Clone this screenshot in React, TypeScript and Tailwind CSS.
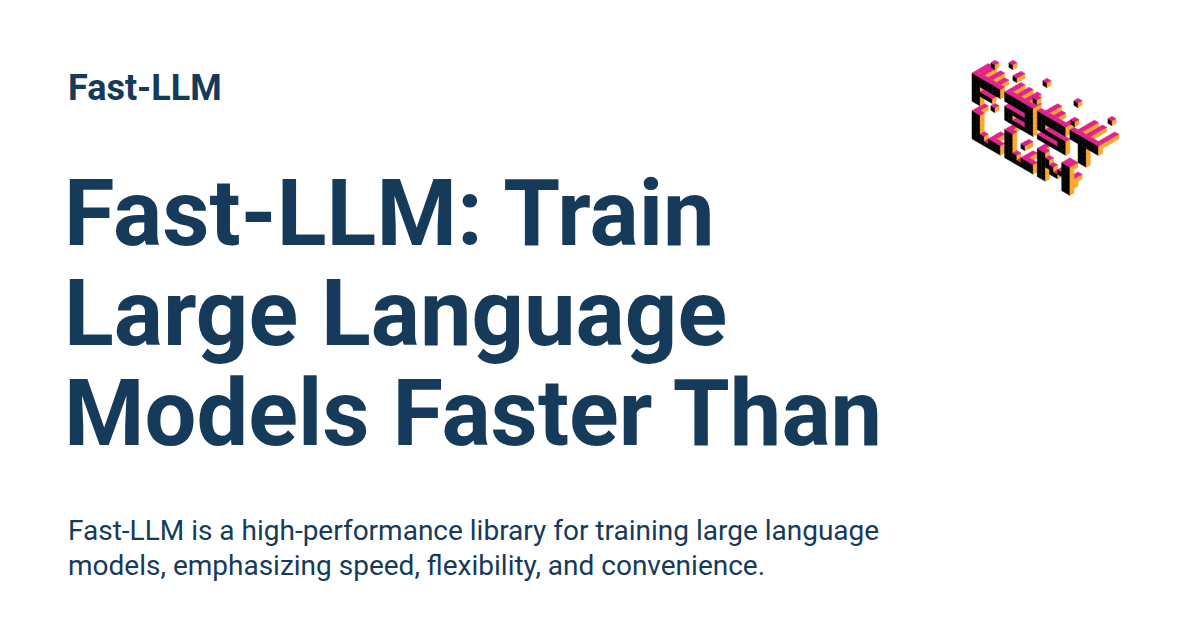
import React from 'react';

const A = 4.08;
const B = 2.36;
const H = 4.7;
const pt = (u: number, v: number, z: number) =>
  `${(u + v) * A},${(u - v) * B - z * H}`;

// each cell holds the depth of the column, rows run top to bottom
const letters: { u: number; z: number; rows: string[] }[] = [
  { u: 0, z: 9, rows: ['4414131', '1111111', '1100000', '1111100', '1100000', '1100000'] },
  { u: 8, z: 9, rows: ['4141412', '1111111', '0000011', '1111111', '1100011', '1111111'] },
  { u: 16, z: 9, rows: ['1413113', '1111111', '1100000', '1111111', '0000011', '1111111'] },
  { u: 24, z: 9, rows: ['1515115', '1111111', '0011000', '0011000', '0011000', '0011000'] },
  { u: 0, z: 1, rows: ['3100000', '1100000', '1100000', '1100000', '1110311', '1111111'] },
  { u: 8, z: 1, rows: ['3100000', '1100000', '1100000', '1100000', '1110311', '1111111'] },
  { u: 16, z: 1, rows: ['21000022', '11100011', '11110111', '11011013', '11000012', '11000011'] },
];

const voxels: [number, number, number][] = [];
letters.forEach((l) =>
  l.rows.forEach((row, r) =>
    row.split('').forEach((c, i) => {
      for (let v = 0; v < Number(c); v++) voxels.push([l.u + i, v, l.z + 5 - r]);
    }),
  ),
);
voxels.sort((p, q) => p[0] - q[0] || q[1] - p[1] || p[2] - q[2]);
const filled = new Set(voxels.map((p) => p.join()));
const has = (u: number, v: number, z: number) => filled.has([u, v, z].join());

// loose cubes around the letters, in page pixels
const cubes = [
  [995, 65], [1013, 65], [995, 108], [1047, 83], [1037, 100], [1078, 103], [1075, 122], [1112, 121], [1029, 144], [1025, 146], [1021, 76], [1017, 78],
];

const Face = ({ color, points }: { color: string; points: string[] }) => (
  <polygon fill={color} stroke={color} strokeWidth="0.5" strokeLinejoin="round" points={points.join(' ')} />
);

const Cube = ({ u, v, z, all }: { u: number; v: number; z: number; all?: boolean }) => (
  <g>
    {(all || !has(u, v - 1, z)) && (
      <Face color="#000" points={[pt(u, v, z), pt(u + 1, v, z), pt(u + 1, v, z + 1), pt(u, v, z + 1)]} />
    )}
    {(all || !has(u + 1, v, z)) && (
      <Face color="#fca82c" points={[pt(u + 1, v, z), pt(u + 1, v + 1, z), pt(u + 1, v + 1, z + 1), pt(u + 1, v, z + 1)]} />
    )}
    {(all || !has(u, v, z + 1)) && (
      <Face color="#e0218a" points={[pt(u, v, z + 1), pt(u + 1, v, z + 1), pt(u + 1, v + 1, z + 1), pt(u, v + 1, z + 1)]} />
    )}
  </g>
);

const Logo = () => (
  <svg width="160" height="150" viewBox="0 0 160 150" className="shrink-0">
    <g transform="translate(2,93.5)">
      {voxels.map(([u, v, z], i) => (
        <Cube key={i} u={u} v={v} z={z} />
      ))}
    </g>
    {cubes.map(([x, y], i) => (
      <g key={i} transform={`translate(${x - 970 - A},${y - 50 + H / 2})`}>
        <Cube u={0} v={0} z={0} all />
      </g>
    ))}
  </svg>
);

const App = () => {
  return (
    <div className="w-[1200px] h-[630px] bg-white flex justify-between overflow-hidden font-['Roboto',sans-serif] text-[#163a5a]">
      <div className="pl-[68px] pt-[67px]">
        <div className="text-[36px] leading-[42px] font-bold">Fast-LLM</div>
        <h1 className="mt-[55px] text-[92px] leading-[100px] font-bold -ml-[4px] whitespace-nowrap">
          Fast-LLM: Train
          <br />
          Large Language
          <br />
          Models Faster Than
        </h1>
        <p className="mt-[49px] text-[28px] leading-[35px] whitespace-nowrap">
          Fast-LLM is a high-performance library for training large language
          <br />
          models, emphasizing speed, flexibility, and convenience.
        </p>
      </div>
      <div className="pt-[50px] pr-[70px]">
        <Logo />
      </div>
    </div>
  );
};

export default App;
